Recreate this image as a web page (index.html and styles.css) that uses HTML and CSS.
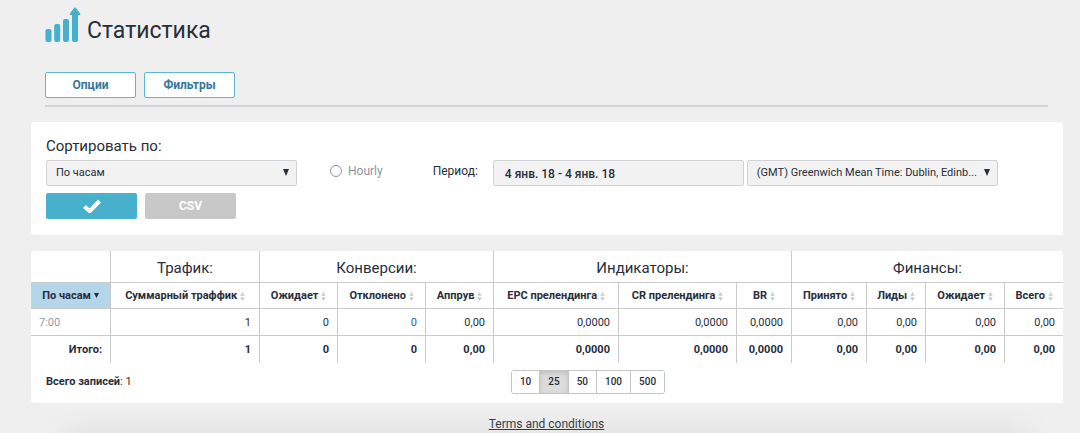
FILE: index.html
```html
<!DOCTYPE html>
<html lang="ru">
<head>
<meta charset="utf-8">
<title>Статистика</title>
<link rel="stylesheet" href="styles.css">
</head>
<body>
<svg class="defs" aria-hidden="true">
  <symbol id="sort" viewBox="0 0 5 10"><path d="M2.500 0L5 4.200H0zM2.500 10L0 5.800H5z"/></symbol>
</svg>
<header class="head">
  <div class="brand">
    <svg class="logo" viewBox="0 0 36 35" aria-hidden="true">
      <rect x="0.500" y="22" width="6" height="13" rx="2"/>
      <rect x="9.200" y="17" width="6" height="18" rx="2"/>
      <rect x="18" y="12" width="6" height="23" rx="2"/>
      <path d="M27 8h-1.300q-1.600-.3-.6-1.700L29 .9q1-1.200 2 0l4 5.400q.9 1.400-.7 1.700H33v25q0 2-2 2h-2q-2 0-2-2z"/>
    </svg>
    <h1 class="title">Статистика</h1>
  </div>
  <nav class="tabs">
    <button class="btn outline" type="button">Опции</button>
    <button class="btn outline" type="button">Фильтры</button>
  </nav>
</header>
<main class="main">
  <form class="card filters">
    <label class="sort-label" for="group">Сортировать по:</label>
    <div class="fields">
      <span class="picker group"><select class="field" id="group"><option>По часам</option></select></span>
      <label class="hourly"><input class="radio" type="radio" name="mode">Hourly</label>
      <label class="period" for="dates">Период:</label>
      <input class="field dates" id="dates" type="text" value="4 янв. 18 - 4 янв. 18">
      <span class="picker zone"><select class="field" aria-label="Часовой пояс"><option>(GMT) Greenwich Mean Time: Dublin, Edinb...</option></select></span>
    </div>
    <div class="actions">
      <button class="btn primary" type="button" aria-label="Применить"><svg class="check" viewBox="0 0 18 14"><path d="M1.500 7.500L6.700 12.200L16.500 2"/></svg></button>
      <button class="btn muted" type="button">CSV</button>
    </div>
  </form>
  <section class="card report">
    <table class="table">
      <colgroup><col class="c80"><col class="c149"><col class="c78"><col class="c88"><col class="c68"><col class="c125"><col class="c118"><col class="c55"><col class="c75"><col class="c59"><col class="c79"><col class="c58"></colgroup>
      <thead>
        <tr class="groups"><td></td><th>Трафик:</th><th colspan="3">Конверсии:</th><th colspan="3">Индикаторы:</th><th colspan="4">Финансы:</th></tr>
        <tr class="names">
          <th class="active">По часам <svg class="down" viewBox="0 0 5 5"><path d="M0 0H5L2.500 5z"/></svg></th>
          <th>Суммарный траффик <svg class="sort"><use href="#sort"/></svg></th>
          <th>Ожидает <svg class="sort"><use href="#sort"/></svg></th>
          <th>Отклонено <svg class="sort"><use href="#sort"/></svg></th>
          <th>Аппрув <svg class="sort"><use href="#sort"/></svg></th>
          <th>EPC прелендинга <svg class="sort"><use href="#sort"/></svg></th>
          <th>CR прелендинга <svg class="sort"><use href="#sort"/></svg></th>
          <th>BR <svg class="sort"><use href="#sort"/></svg></th>
          <th>Принято <svg class="sort"><use href="#sort"/></svg></th>
          <th>Лиды <svg class="sort"><use href="#sort"/></svg></th>
          <th>Ожидает <svg class="sort"><use href="#sort"/></svg></th>
          <th>Всего <svg class="sort"><use href="#sort"/></svg></th>
        </tr>
      </thead>
      <tbody>
        <tr><td class="hour">7:00</td><td>1</td><td>0</td><td><a class="link" href="#">0</a></td><td>0,00</td><td>0,0000</td><td>0,0000</td><td>0,0000</td><td>0,00</td><td>0,00</td><td>0,00</td><td>0,00</td></tr>
      </tbody>
      <tfoot>
        <tr><th>Итого:</th><td>1</td><td>0</td><td>0</td><td>0,00</td><td>0,0000</td><td>0,0000</td><td>0,0000</td><td>0,00</td><td>0,00</td><td>0,00</td><td>0,00</td></tr>
      </tfoot>
    </table>
    <div class="summary">
      <p class="total"><b>Всего записей</b>: 1</p>
      <div class="pager">
        <button class="size" type="button">10</button><button class="size current" type="button">25</button><button class="size" type="button">50</button><button class="size" type="button">100</button><button class="size" type="button">500</button>
      </div>
    </div>
  </section>
</main>
<footer class="foot"><a class="terms" href="#">Terms and conditions</a></footer>
</body>
</html>
```
FILE: styles.css
```css
* { box-sizing: border-box; }
body { margin: 0; background: #efefef; color: #272e3b; font: 11px/14px Roboto, "Liberation Sans", sans-serif; }
button, input, select { font: inherit; color: inherit; margin: 0; }
.defs { display: none; }

.head { margin: 0 32px 0 45px; padding-top: 7px; border-bottom: 2px solid #d4d4d6; }
.brand { display: flex; align-items: flex-end; gap: 6px; }
.logo { width: 36px; height: 35px; fill: #47b0cd; }
.title { margin: 0; font-size: 23px; line-height: 22px; font-weight: 400; }
.tabs { display: flex; gap: 8px; padding: 30px 0 7px; }

.btn { display: flex; align-items: center; justify-content: center; width: 91px; height: 26px; padding: 0; border: 0; border-radius: 2px; font-size: 12px; font-weight: 700; }
.outline { background: #fff; border: 1px solid #5ab8d0; color: #35789a; }
.primary { background: #47b0cd; }
.muted { background: #c8c8c8; color: #fff; }
.check { width: 18px; height: 14px; fill: none; stroke: #fff; stroke-width: 4; }

.main { margin: 15px 17px 0 31px; }
.card { background: #fff; border-radius: 3px; }
.filters { padding: 14px 15px 16px; }
.sort-label { display: block; font-size: 15px; line-height: 20px; }
.fields { display: flex; align-items: center; margin-top: 4px; }
.field { width: 100%; height: 26px; padding: 0 9px; background: #f2f2f2; border: 1px solid #d0d2d4; border-radius: 2px; appearance: none; }
.picker { position: relative; flex: 0 1 251px; }
.picker::after { content: ""; position: absolute; right: 8px; top: 9px; border: solid transparent; border-width: 7px 3px 0; border-top-color: #272e3b; pointer-events: none; }
.hourly { display: flex; align-items: center; gap: 6px; margin-left: 33px; padding-bottom: 4px; font-size: 12px; color: #8b95a2; }
.radio { appearance: none; width: 12px; height: 12px; border: 1px solid #8b95a2; border-radius: 50%; background: #fff; }
.period { margin: 0 15px 0 50px; padding-bottom: 4px; font-size: 12px; }
.dates { flex: 0 1 251px; padding: 2px 11px 0; font-size: 12px; font-weight: 500; }
.zone { margin-left: 3px; }
.actions { display: flex; gap: 8px; margin-top: 7px; }

.report { margin-top: 16px; overflow: hidden; }
.table { width: 100%; table-layout: fixed; border-collapse: separate; border-spacing: 0; }
.c80 { width: 80px; } .c149 { width: 149px; } .c78 { width: 78px; } .c88 { width: 88px; }
.c68 { width: 68px; } .c125 { width: 125px; } .c118 { width: 118px; } .c55 { width: 55px; }
.c75 { width: 75px; } .c59 { width: 59px; } .c79 { width: 79px; } .c58 { width: 58px; }
.table td, .table th { height: 27px; padding: 1px 8px 0; border: solid #c8cacb; border-width: 0 1px 1px 0; text-align: right; white-space: nowrap; }
.table tr > :last-child { border-right: 0; }
.table .groups > * { height: 32px; padding-top: 2px; font-size: 15px; font-weight: 400; text-align: center; }
.table .names th { height: 26px; padding: 0; text-align: center; }
.table .names .active { background: #b4d5ea; }
.table tfoot > tr > * { padding-top: 0; border-bottom: 0; font-weight: 700; }
.table .hour { text-align: left; color: #929ba8; }
.link { color: #1f5fae; text-decoration: none; }
.sort { width: 5px; height: 9px; fill: #c5cad0; vertical-align: -2px; }
.down { width: 5px; height: 5px; fill: #272e3b; vertical-align: 1px; }

.summary { display: grid; grid-template-columns: 1fr auto 1fr; align-items: center; padding: 7px 15px 9px; }
.total { margin: 0; }
.pager { display: flex; margin-left: 82px; border: 1px solid #c5c5c5; border-radius: 3px; overflow: hidden; }
.size { height: 22px; padding: 0 8px; background: #fff; border: 0; border-right: 1px solid #c5c5c5; font-size: 10px; font-weight: 500; }
.size:last-child { border-right: 0; }
.current { background: #dcdcdc; box-shadow: inset 0 2px 4px #bdbdbd; }

.foot { margin: 8px 32px 0 45px; padding: 6px 0 3px; text-align: center; font-size: 12px; background: linear-gradient(90deg, #efefef, transparent 40px calc(100% - 40px), #efefef), linear-gradient(#efefef, #e6e6e6); }
.terms { color: #333f4d; text-decoration: underline; }
```
